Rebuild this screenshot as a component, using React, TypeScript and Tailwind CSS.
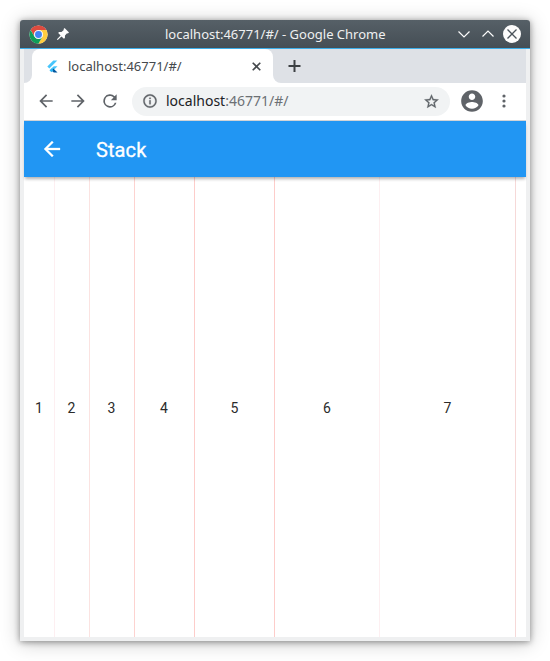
const columns = [
  { label: '1', className: 'w-[31px] border-[#fdeff1]' },
  { label: '2', className: 'w-[35px] border-[#fbe3e1] pr-px' },
  { label: '3', className: 'w-[45px] border-[#fdd3d0] pr-px' },
  { label: '4', className: 'w-[60px] border-[#fdcdca] pr-px' },
  { label: '5', className: 'w-[80px] border-[#fdcdca]' },
  { label: '6', className: 'w-[105px] border-[#fdeff1]' },
  { label: '7', className: 'w-[136px] border-[#f6d9d8]' },
];

function ChromeLogo() {
  return (
    <svg className="ml-[9px] h-[19px] w-[19px]" viewBox="0 0 48 48">
      <circle cx="24" cy="24" r="23" fill="#fff" />
      <path d="M4.1 12.5A23 23 0 0 1 43.9 12.5H24A11.5 11.5 0 0 0 14 29.7Z" fill="#dd4b3e" />
      <path d="M43.9 12.5A23 23 0 0 1 24 47L34 29.7A11.5 11.5 0 0 0 24 12.5Z" fill="#ffcd40" />
      <path d="M24 47A23 23 0 0 1 4.1 12.5L14 29.7A11.5 11.5 0 0 0 34 29.7Z" fill="#0f9d58" />
      <circle cx="24" cy="24" r="11" fill="#f1f1f1" />
      <circle cx="24" cy="24" r="8.7" fill="#4285f4" />
    </svg>
  );
}

function TitleBar() {
  return (
    <header className="flex h-[29px] shrink-0 items-center rounded-t-[3px] border-b border-[#3daee9] bg-linear-to-b from-[#566067] to-[#454e55] text-[#eff0f1]">
      <ChromeLogo />
      <svg className="ml-[9px] h-3 w-3" viewBox="0 0 12 12" fill="#fcfcfc">
        <path d="M7.6 0 12 4.4 10.9 5.4 10 5.2 8 7.5 7.9 10 6.9 10.8 4.5 8.4 1 11.8 0 12 .2 11 3.6 7.5 1.2 5.1 2 4.1 4.5 4 6.8 2 6.6 1Z" />
      </svg>
      <span className="ml-[96px] w-[221px] whitespace-nowrap text-[13px] leading-[18px]">localhost:46771/#/ - Google Chrome</span>
      <svg className="ml-auto mr-2 h-5 w-[68px] shrink-0" viewBox="0 0 68 20" fill="none" stroke="#fcfcfc" strokeWidth="1.2">
        <path d="m4.5 7.5 5.5 5.5 5.5-5.5M28.5 12.5 34 7l5.5 5.5" />
        <circle cx="58" cy="10" r="9" fill="#fcfcfc" stroke="none" />
        <path d="m53.5 5.5 9 9m0-9-9 9" stroke="#4b545b" strokeWidth="1.3" />
      </svg>
    </header>
  );
}

function TabStrip() {
  return (
    <div className="flex h-[34px] shrink-0 bg-white">
      <div className="w-2 rounded-br-[8px] bg-[#dee1e6]" />
      <div className="w-[241px] bg-[#dee1e6]">
        <div className="flex h-full items-center rounded-t-[8px] bg-white">
          <svg className="ml-[15px] h-[13px] w-[11px]" viewBox="0 0 11 13">
            <path d="M6.3.5h4L2.3 8.5.3 6.5Z" fill="#47c5fb" />
            <path d="M6.8 6.2h3.7L6.3 10.4 4.3 8.6Z" fill="#47c5fb" />
            <path d="M4.4 10.4 6.3 8.6 10.5 12.4H6.8Z" fill="#00569e" />
            <path d="m4.5 8.3-2 2 1.9 1.9 2-1.9Z" fill="#29b6f6" />
          </svg>
          <span className="ml-[10px] text-[13px] leading-[18px] text-[#45494d]">localhost:46771/#/</span>
          <svg className="ml-auto mr-3 h-[9px] w-[9px]" viewBox="0 0 9 9" fill="none" stroke="#45494d" strokeWidth="1.6">
            <path d="m.7.7 7.6 7.6m0-7.6L.7 8.3" />
          </svg>
        </div>
      </div>
      <div className="flex flex-1 items-center rounded-bl-[8px] bg-[#dee1e6] pl-[15px]">
        <svg className="h-3 w-[13px]" viewBox="0 0 13 12" fill="none" stroke="#3c4043" strokeWidth="2">
          <path d="M6.5 0v12M.5 6h12" />
        </svg>
      </div>
    </div>
  );
}

function Toolbar() {
  return (
    <div className="flex h-[38px] shrink-0 items-center border-b border-[#d2d4d7] bg-white">
      <svg className="-mt-px ml-[12px] h-5 w-5" viewBox="0 0 24 24" fill="#5f6368">
        <path d="M20 11H7.8l5.6-5.6L12 4l-8 8 8 8 1.4-1.4L7.8 13H20Z" />
      </svg>
      <svg className="-mt-px ml-[12px] h-5 w-5" viewBox="0 0 24 24" fill="#5f6368">
        <path d="M4 11h12.2l-5.6-5.6L12 4l8 8-8 8-1.4-1.4 5.6-5.6H4Z" />
      </svg>
      <svg className="-mt-px ml-[12px] h-5 w-5" viewBox="0 0 24 24" fill="#5f6368">
        <path d="M17.65 6.35A8 8 0 1 0 19.73 14h-2.08A6 6 0 1 1 12 6c1.66 0 3.14.69 4.22 1.78L13 11h7V4Z" />
      </svg>
      <div className="ml-[12px] flex h-[29px] w-[318px] items-center rounded-full bg-[#f1f3f4]">
        <svg className="-mt-px ml-[10px] h-4 w-4" viewBox="0 0 24 24" fill="#5f6368" stroke="#5f6368" strokeWidth=".4">
          <path d="M11 17h2v-6h-2v6zm1-15C6.48 2 2 6.48 2 12s4.48 10 10 10 10-4.48 10-10S17.52 2 12 2zm0 18c-4.41 0-8-3.59-8-8s3.59-8 8-8 8 3.59 8 8-3.59 8-8 8zM11 9h2V7h-2v2z" />
        </svg>
        <span className="-mt-px ml-2 text-[14px] leading-5 text-[#202124]">
          localhost<span className="text-[#6c7074]">:46771/#/</span>
        </span>
        <svg className="-mt-px ml-auto mr-[10px] h-[17px] w-[17px]" viewBox="0 0 24 24" fill="#5f6368" stroke="#5f6368" strokeWidth=".4">
          <path d="m22 9.24-7.19-.62L12 2 9.19 8.63 2 9.24l5.46 4.73L5.82 21 12 17.27 18.18 21l-1.63-7.03L22 9.24zM12 15.4l-3.76 2.27 1-4.28-3.32-2.88 4.38-.38L12 6.1l1.71 4.04 4.38.38-3.32 2.88 1 4.28L12 15.4z" />
        </svg>
      </div>
      <svg className="-mt-px ml-[9px] h-[26px] w-[26px]" viewBox="0 0 24 24" fill="#5f6368">
        <path d="M12 2C6.48 2 2 6.48 2 12s4.48 10 10 10 10-4.48 10-10S17.52 2 12 2zm0 3c1.66 0 3 1.34 3 3s-1.34 3-3 3-3-1.34-3-3 1.34-3 3-3zm0 14.2c-2.5 0-4.71-1.28-6-3.22.03-1.99 4-3.08 6-3.08 1.99 0 5.97 1.09 6 3.08-1.29 1.94-3.5 3.22-6 3.22z" />
      </svg>
      <svg className="-mt-px ml-[17px] h-[14px] w-[4px]" viewBox="0 0 4 14" fill="#5f6368">
        <circle cx="2" cy="2" r="1.6" />
        <circle cx="2" cy="7" r="1.6" />
        <circle cx="2" cy="12" r="1.6" />
      </svg>
    </div>
  );
}

export default function App() {
  return (
    <div className="h-[661px] w-[550px] overflow-hidden bg-white p-5 font-['Noto_Sans',sans-serif]">
      <div className="flex h-[621px] w-[510px] flex-col rounded-t-[3px] bg-[#eff0f1] shadow-[0_2px_20px_rgba(0,0,0,0.22),0_1px_6px_rgba(0,0,0,0.4)]">
        <TitleBar />
        <div className="mx-1 mb-1 flex flex-1 flex-col bg-white">
          <TabStrip />
          <Toolbar />
          <div className="relative flex h-[56px] shrink-0 items-center bg-[#2196f3] font-[Roboto,sans-serif] text-white shadow-[0_3px_3px_-1px_rgba(0,0,0,0.3)]">
            <svg className="ml-4 h-6 w-6" viewBox="0 0 24 24" fill="currentColor" stroke="currentColor" strokeWidth=".3">
              <path d="M20 11H7.83l5.59-5.59L12 4l-8 8 8 8 1.41-1.41L7.83 13H20v-2z" />
            </svg>
            <h1 className="ml-8 pt-[2px] text-[20px] font-normal leading-6 tracking-[0.1px] [-webkit-text-stroke:0.3px_white]">Stack</h1>
          </div>
          <main className="flex flex-1 font-[Roboto,sans-serif] text-[14px] leading-4 text-[#2b2b2b]">
            {columns.map((column) => (
              <div key={column.label} className={`flex items-center justify-center border-r pt-[2px] ${column.className}`}>
                {column.label}
              </div>
            ))}
          </main>
        </div>
      </div>
    </div>
  );
}
